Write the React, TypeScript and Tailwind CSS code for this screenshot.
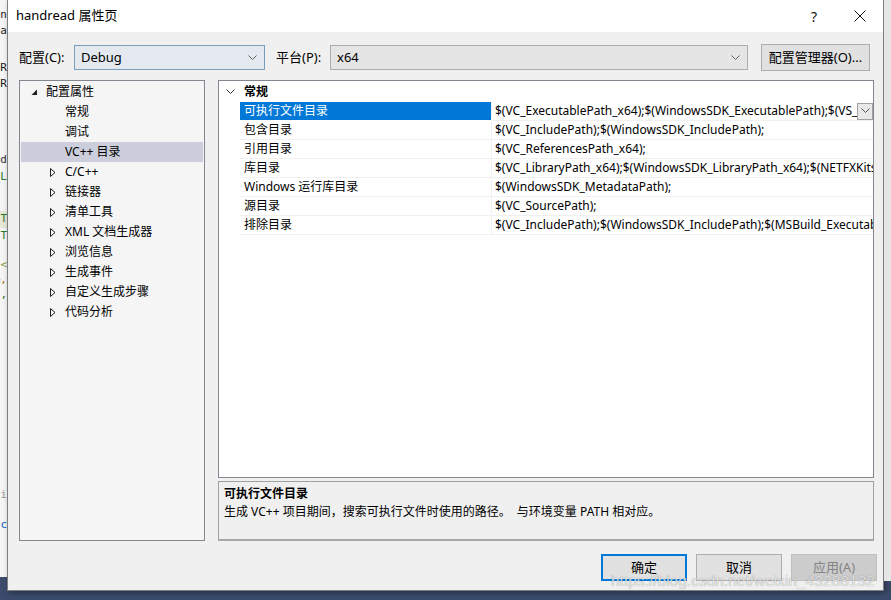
import React from "react";

const treeItems = [
  { label: "常规", level: 1, kind: "leaf" },
  { label: "调试", level: 1, kind: "leaf" },
  { label: "VC++ 目录", level: 1, kind: "leaf", selected: true },
  { label: "C/C++", level: 1, kind: "closed" },
  { label: "链接器", level: 1, kind: "closed" },
  { label: "清单工具", level: 1, kind: "closed" },
  { label: "XML 文档生成器", level: 1, kind: "closed" },
  { label: "浏览信息", level: 1, kind: "closed" },
  { label: "生成事件", level: 1, kind: "closed" },
  { label: "自定义生成步骤", level: 1, kind: "closed" },
  { label: "代码分析", level: 1, kind: "closed" },
];

const props = [
  { name: "可执行文件目录", value: "$(VC_ExecutablePath_x64);$(WindowsSDK_ExecutablePath);$(VS_ExecutablePath);$(MSBuild_ExecutablePath)", selected: true },
  { name: "包含目录", value: "$(VC_IncludePath);$(WindowsSDK_IncludePath);" },
  { name: "引用目录", value: "$(VC_ReferencesPath_x64);" },
  { name: "库目录", value: "$(VC_LibraryPath_x64);$(WindowsSDK_LibraryPath_x64);$(NETFXKitsDir)Lib\\um\\x64" },
  { name: "Windows 运行库目录", value: "$(WindowsSDK_MetadataPath);" },
  { name: "源目录", value: "$(VC_SourcePath);" },
  { name: "排除目录", value: "$(VC_IncludePath);$(WindowsSDK_IncludePath);$(MSBuild_ExecutablePath);$(VC_LibraryPath_x64)" },
];

const codeLines = [
  { h: 8, t: "" },
  { h: 15, t: "Gen", c: "text-[#222]" },
  { h: 16, t: "ca", c: "text-[#222]" },
  { h: 22, t: "" },
  { h: 15, t: "ER", c: "text-[#222]" },
  { h: 16, t: "ER", c: "text-[#222]" },
  { h: 60, t: "" },
  { h: 17, t: "ud", c: "text-[#333]" },
  { h: 17, t: "_L", c: "text-[#2b7a2b]" },
  { h: 25, t: "" },
  { h: 17, t: "T", c: "text-[#2b7a2b] bg-[#e8e8d8]" },
  { h: 17, t: "T", c: "text-[#2b7a2b]" },
  { h: 12, t: "" },
  { h: 16, t: "<", c: "text-[#7a9a3a]" },
  { h: 15, t: "&,", c: "text-[#b07020]" },
  { h: 14, t: ",", c: "text-[#2b7a2b]" },
  { h: 185, t: "" },
  { h: 17, t: "ci", c: "text-[#999]" },
  { h: 13, t: "" },
  { h: 17, t: "c", c: "text-[#2060c0]" },
];

function Chevron({ className = "" }: { className?: string }) {
  return (
    <svg width="9" height="6" viewBox="0 0 9 6" className={className}>
      <path d="M0.5 0.5 L4.5 4.5 L8.5 0.5" fill="none" stroke="currentColor" strokeWidth="1" />
    </svg>
  );
}

function TreeGlyph({ kind }: { kind: string }) {
  if (kind === "open")
    return (
      <svg width="7" height="7" viewBox="0 0 7 7">
        <path d="M6 0.5 L6 6 L0.5 6 Z" fill="#1e1e1e" />
      </svg>
    );
  if (kind === "closed")
    return (
      <svg width="6" height="9" viewBox="0 0 6 9">
        <path d="M0.5 0.5 L5 4.5 L0.5 8.5 Z" fill="none" stroke="#1e1e1e" strokeWidth="1" />
      </svg>
    );
  return null;
}

function Select({ value, width, focused }: { value: string; width: string; focused?: boolean }) {
  return (
    <div
      className={`${width} h-[25px] flex items-center justify-between pl-[6px] pr-[7px] border ${
        focused ? "border-[#7b9ebd] bg-[#e3e9ef]" : "border-[#adadad] bg-[#e5e5e5]"
      }`}
    >
      <span className="text-[13px]">{value}</span>
      <Chevron className="text-[#606060]" />
    </div>
  );
}

export default function App() {
  return (
    <div className="w-[891px] h-[600px] flex overflow-hidden bg-[#3b4b6b] font-['Noto_Sans','Noto_Sans_CJK_SC',sans-serif] text-[12px] text-black relative">
      {/* editor behind the dialog */}
      <div className="w-[7px] h-[577px] bg-[#f5f5f5] overflow-hidden flex flex-col font-['DejaVu_Sans_Mono',monospace] text-[11px]">
        {codeLines.map((l, i) => (
          <div key={i} style={{ height: l.h }} className="flex justify-end items-center whitespace-nowrap">
            {l.t && <span className={l.c}>{l.t}</span>}
          </div>
        ))}
      </div>

      {/* dialog */}
      <div className="w-[877px] h-[591px] flex flex-col border-l border-r border-b border-[#7f7f7f] bg-[#f0f0f0] shadow-[2px_2px_6px_rgba(0,0,0,0.35)]">
        <div className="h-[32px] bg-white flex items-center justify-between">
          <span className="pl-[8px] text-[13px]">handread 属性页</span>
          <div className="flex h-full">
            <div className="w-[46px] h-full flex items-center justify-center text-[14px] text-[#111]">?</div>
            <div className="w-[46px] h-full flex items-center justify-center">
              <svg width="12" height="12" viewBox="0 0 12 12">
                <path d="M0.5 0.5 L11.5 11.5 M11.5 0.5 L0.5 11.5" stroke="#111" strokeWidth="1" />
              </svg>
            </div>
          </div>
        </div>

        {/* config row */}
        <div className="mt-[12px] pl-[11px] h-[27px] flex items-center">
          <span className="w-[55px] text-[13px]">配置(C):</span>
          <Select value="Debug" width="w-[191px]" focused />
          <span className="ml-[11px] w-[54px] text-[13px]">平台(P):</span>
          <Select value="x64" width="w-[418px]" />
          <div className="ml-[13px] w-[109px] h-[27px] border border-[#adadad] bg-[#e1e1e1] flex items-center justify-center text-[13px]">
            配置管理器(O)...
          </div>
        </div>

        {/* main */}
        <div className="mt-[9px] pl-[11px] h-[461px] flex gap-[13px]">
          <div className="w-[186px] h-full border border-[#828790] bg-[#f5f5f5] px-[1px] pt-[1px] flex flex-col">
            <div className="h-[20px] flex items-center pl-[10px]">
              <div className="w-[15px] flex items-center">
                <TreeGlyph kind="open" />
              </div>
              <span>配置属性</span>
            </div>
            {treeItems.map((it) => (
              <div
                key={it.label}
                className={`h-[20px] flex items-center pl-[29px] ${it.selected ? "bg-[#cccedb]" : ""}`}
              >
                <div className="w-[15px] flex items-center">
                  <TreeGlyph kind={it.kind} />
                </div>
                <span>{it.label}</span>
              </div>
            ))}
          </div>

          <div className="w-[656px] h-full flex flex-col gap-[3px]">
            <div className="h-[398px] border border-[#828790] bg-white pt-[1px] flex flex-col overflow-hidden">
              <div className="h-[20px] flex items-center">
                <div className="w-[21px] flex justify-center pl-[2px]">
                  <Chevron className="text-[#333]" />
                </div>
                <span className="pl-[4px] font-bold">常规</span>
              </div>
              {props.map((p) => (
                <div key={p.name} className="h-[19px] flex">
                  <div className="w-[21px] shrink-0" />
                  <div
                    className={`w-[252px] shrink-0 flex items-center pl-[4px] border-b border-r border-[#f0f0f0] ${
                      p.selected ? "bg-[#0078d7] text-white border-b-white" : ""
                    }`}
                  >
                    {p.name}
                  </div>
                  <div className="flex-1 min-w-0 flex items-center border-b border-[#f0f0f0] pl-[3px]">
                    <span className="flex-1 min-w-0 overflow-hidden whitespace-nowrap">{p.value}</span>
                    {p.selected && (
                      <div className="w-[16px] h-[17px] shrink-0 border border-[#a0a0a0] bg-[#e8e8e8] flex items-center justify-center">
                        <Chevron className="text-[#555]" />
                      </div>
                    )}
                  </div>
                </div>
              ))}
            </div>
            <div className="flex-1 border border-[#a0a0a0] border-b-2 border-b-[#a8a8a8] bg-[#f0f0f0] pl-[5px] pt-[2px]">
              <div className="font-bold leading-[19px]">可执行文件目录</div>
              <div className="leading-[18px]">生成 VC++ 项目期间，搜索可执行文件时使用的路径。&nbsp; 与环境变量 PATH 相对应。</div>
            </div>
          </div>
        </div>

        {/* buttons */}
        <div className="mt-[13px] pr-[6px] flex justify-end gap-[9px]">
          <div className="w-[86px] h-[27px] border-2 border-[#0078d7] bg-[#e1e1e1] flex items-center justify-center text-[13px]">
            确定
          </div>
          <div className="w-[86px] h-[27px] border border-[#adadad] bg-[#e1e1e1] flex items-center justify-center text-[13px]">
            取消
          </div>
          <div className="w-[86px] h-[27px] border border-[#bfbfbf] bg-[#cccccc] text-[#838383] flex items-center justify-center text-[13px]">
            应用(A)
          </div>
        </div>
      </div>

      <div className="flex-1 h-[581px] bg-[#e6e6e6]" />

      {/* watermark */}
      <div className="absolute left-[611px] top-[569px] text-[15.5px] font-['Liberation_Sans',sans-serif] text-white/75 [text-shadow:0_0_1px_rgba(0,0,0,0.45)] whitespace-nowrap">
        https://blog.csdn.net/weixin_43288132
      </div>
    </div>
  );
}
